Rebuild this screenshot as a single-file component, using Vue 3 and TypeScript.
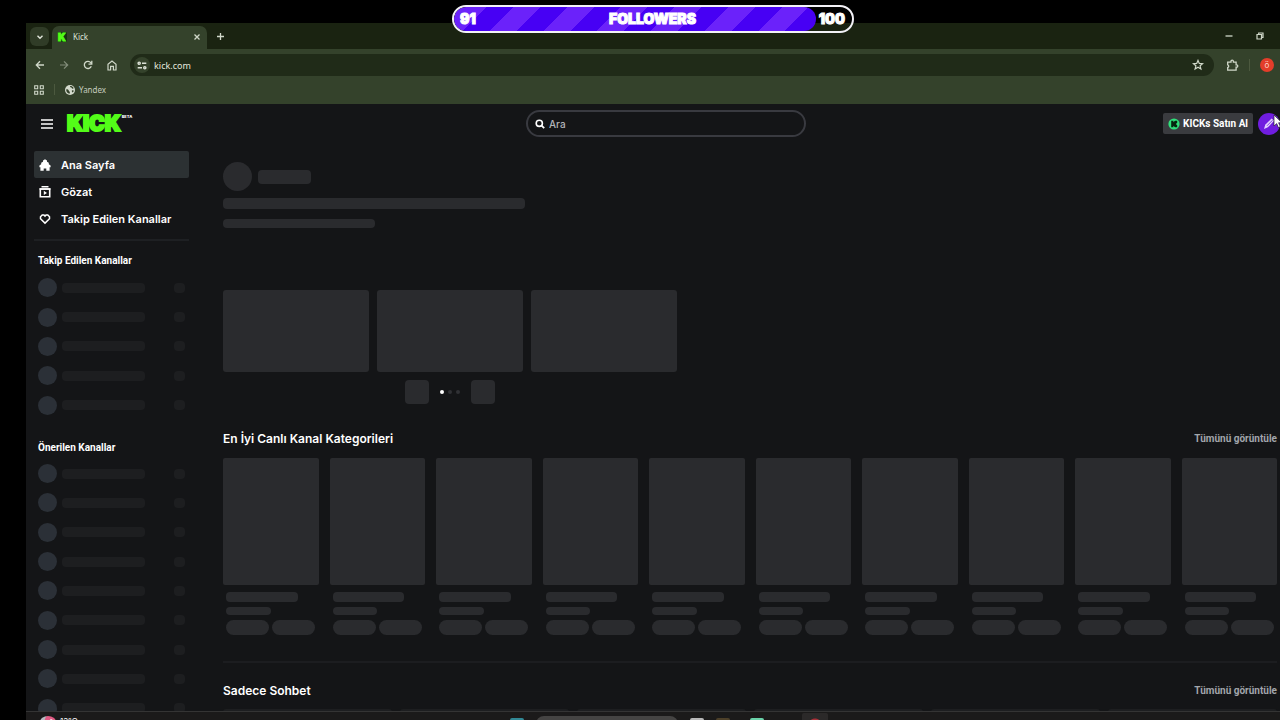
<script setup lang="ts">
import { ref } from 'vue'

const query = ref('')
const address = ref('kick.com')
const navigation = ['Ana Sayfa', 'Gözat', 'Takip Edilen Kanallar']
const channelGroups = [
  { title: 'Takip Edilen Kanallar', count: 5, kind: 'followed' },
  { title: 'Önerilen Kanallar', count: 9, kind: 'suggested' },
]
</script>

<template>
  <div class="desktop">
    <section class="browser">
      <div class="tabs">
        <button class="tab-search" aria-label="Sekme ara">
          <svg width="8" height="8" viewBox="0 0 8 8"><path d="M1.5 2.7 4 5.2 6.5 2.7" fill="none" stroke="currentColor" stroke-width="1.4" /></svg>
        </button>
        <div class="tab">
          <span class="favicon">K</span>
          <span class="tab-title">Kick</span>
          <button class="plain" aria-label="Sekmeyi kapat">
            <svg width="8" height="8" viewBox="0 0 8 8"><path d="m1.5 1.5 5 5m0-5-5 5" stroke="currentColor" stroke-width="1.3" /></svg>
          </button>
        </div>
        <button class="plain new-tab" aria-label="Yeni sekme">
          <svg width="9" height="9" viewBox="0 0 9 9"><path d="M4.5 1v7M1 4.5h7" stroke="currentColor" stroke-width="1.3" /></svg>
        </button>
        <div class="window-buttons">
          <button class="plain" aria-label="Küçült"><svg width="10" height="10" viewBox="0 0 10 10"><path d="M1.5 5h7" stroke="currentColor" stroke-width="1.3" /></svg></button>
          <button class="plain" aria-label="Geri yükle"><svg width="10" height="10" viewBox="0 0 10 10"><path d="M2 3.5h4.5V8H2zM3.7 3V2H8v4.5H7" fill="none" stroke="currentColor" stroke-width="1.2" /></svg></button>
        </div>
      </div>

      <div class="toolbar">
        <div class="history">
          <button class="plain" aria-label="Geri"><svg width="10" height="10" viewBox="0 0 10 10"><path d="M9 5H1.5M5 1.3 1.3 5 5 8.7" fill="none" stroke="currentColor" stroke-width="1.3" /></svg></button>
          <button class="plain muted" aria-label="İleri"><svg width="10" height="10" viewBox="0 0 10 10"><path d="M1 5h7.5M5 1.3 8.7 5 5 8.7" fill="none" stroke="currentColor" stroke-width="1.2" /></svg></button>
          <button class="plain" aria-label="Yenile"><svg width="10" height="10" viewBox="0 0 10 10"><path d="M8.3 6.2A3.6 3.6 0 1 1 7.8 2.7L8.7 3.8M8.8.8v3.3H5.5" fill="none" stroke="currentColor" stroke-width="1.3" /></svg></button>
          <button class="plain" aria-label="Giriş"><svg width="10" height="11" viewBox="0 0 10 11"><path d="M1 4.2 5 1l4 3.2V10H6.4V6.4H3.6V10H1z" fill="none" stroke="currentColor" stroke-width="1.2" /></svg></button>
        </div>
        <div class="omnibox">
          <button class="site-info" aria-label="Site bilgileri">
            <svg width="10" height="9" viewBox="0 0 10 9"><g fill="none" stroke="currentColor" stroke-width="1.4"><circle cx="2.2" cy="2.2" r="1.1" /><path d="M5 2.2h4.3M.7 6.8H5" /><circle cx="7.8" cy="6.8" r="1.1" /></g></svg>
          </button>
          <input v-model="address" aria-label="Adres" />
          <button class="plain" aria-label="Yer işareti ekle"><svg width="12" height="12" viewBox="0 0 12 12"><path d="m6 1.4 1.3 3 3.3.3-2.5 2.1.8 3.2L6 8.3 3.1 10l.8-3.2-2.5-2.1 3.3-.3z" fill="none" stroke="currentColor" stroke-width="1.2" /></svg></button>
        </div>
        <button class="plain extensions" aria-label="Uzantılar"><svg width="13" height="13" viewBox="0 0 13 13"><path d="M1.7 3.1H5V2.4a1.2 1.2 0 0 1 2.4 0v.7h2.7v2.7h.5a1.2 1.2 0 0 1 0 2.4h-.5v3H1.7V8.5a1.4 1.4 0 0 0 0-2.7z" fill="none" stroke="currentColor" stroke-width="1.3" /></svg></button>
        <span class="toolbar-line"></span>
        <button class="profile" aria-label="Profil">ö</button>
      </div>

      <nav class="bookmarks" aria-label="Yer işaretleri">
        <button class="plain" aria-label="Uygulamalar"><svg width="10" height="10" viewBox="0 0 10 10"><path d="M.7.7h3v3h-3zM6.3.7h3v3h-3zM.7 6.3h3v3h-3zM6.3 6.3h3v3h-3z" fill="none" stroke="currentColor" stroke-width="1.1" /></svg></button>
        <span class="bookmark-line"></span>
        <a href="#yandex">
          <svg width="10" height="10" viewBox="0 0 10 10"><circle cx="5" cy="5" r="5" fill="#d4dacd" /><path d="M1.2 4.4c1.6-.2 2.4.5 2.6 1.3s1.2.5 1.1 1.5l-.3 1.5C2.4 8.4 1 6.5 1.2 4.4zM5.2 1.1c-.5.9.1 1.3 1 1.4s.6 1.3 1.4 1.3 1-.7.9-1.1C7.7 1.6 6.6 1 5.2 1.1zM7 5.2l1.8.2c-.1 1-.7 1.7-1.2 2.1-.5-.7-1.1-1.4-.6-2.3z" fill="#34422b" /></svg>
          Yandex
        </a>
      </nav>

      <div class="site">
        <header class="site-header">
          <div class="brand">
            <button class="menu" aria-label="Menü"><svg width="12" height="10" viewBox="0 0 12 10"><path d="M0 1h12M0 5h12M0 9h12" stroke="currentColor" stroke-width="1.7" /></svg></button>
            <a class="logo" href="#kick"><span class="wordmark">KICK</span><span class="beta">BETA</span></a>
          </div>
          <label class="search">
            <svg width="10" height="10" viewBox="0 0 10 10"><circle cx="4.3" cy="4.3" r="3.1" fill="none" stroke="currentColor" stroke-width="1.6" /><path d="m6.6 6.6 2.6 2.6" stroke="currentColor" stroke-width="1.8" /></svg>
            <input v-model="query" type="search" placeholder="Ara" aria-label="Ara" />
          </label>
          <div class="account">
            <button class="buy">
              <svg width="12" height="12" viewBox="0 0 12 12"><circle cx="6" cy="6" r="5.6" fill="#2fe07a" /><path d="M3.2 2.7h2.2v1.6L7 2.7h2.2v2L7.9 6l1.3 1.3v2H7L5.4 7.7v1.6H3.2z" fill="#06260f" /></svg>
              KICKs Satın Al
            </button>
            <button class="avatar" aria-label="Hesap"><svg width="22" height="22" viewBox="0 0 22 22"><path d="m6 16 1.2-4.2 6.4-6.3 2.5 2.3-6.2 6.4z" fill="#e4d0ff" /><path d="m9 12.8 5.5-5.5" stroke="#6821d9" stroke-width=".8" /></svg></button>
          </div>
        </header>

        <div class="content">
          <aside class="sidebar">
            <nav class="main-nav" aria-label="Ana menü">
              <a v-for="(item, i) in navigation" :key="item" href="#menu" :class="{ active: i === 0 }">
                <svg v-if="i === 0" width="12" height="12" viewBox="0 0 12 12"><path d="m6 .3 2 1.3v1.1l1.8 1v1.6l1.8 1.2v1.7h-1v3.5H7.3V9.6H4.7v2.1H1.4V8.2h-1V6.5l1.8-1.2V3.7l1.8-1V1.6z" fill="currentColor" /></svg>
                <svg v-else-if="i === 1" width="12" height="12" viewBox="0 0 12 12"><path d="M2.5.8h7M.5 3h11" stroke="currentColor" stroke-width="1.4" /><path d="M1.3 3h9.4v7.8H1.3z" fill="none" stroke="currentColor" stroke-width="1.6" /><path d="m4.8 4.8 3.2 2.1L4.8 9z" fill="currentColor" /></svg>
                <svg v-else width="12" height="12" viewBox="0 0 12 12"><path d="M3.2 2H5l1 1.2L7 2h1.8l1.7 1.7v2L6 10.1 1.5 5.7v-2z" fill="none" stroke="currentColor" stroke-width="1.5" /></svg>
                {{ item }}
              </a>
            </nav>
            <section v-for="group in channelGroups" :key="group.title" :class="['channels', group.kind]">
              <h2>{{ group.title }}</h2>
              <ul>
                <li v-for="n in group.count" :key="n"><span class="face"></span><span class="name"></span><span class="live"></span></li>
              </ul>
            </section>
          </aside>

          <main>
            <section class="hero">
              <div class="streamer"><span class="bone portrait"></span><span class="bone streamer-name"></span></div>
              <div class="bone stream-title"></div>
              <div class="bone stream-category"></div>
              <div class="previews"><div v-for="n in 3" :key="n" class="bone"></div></div>
              <div class="pager">
                <button class="bone" aria-label="Önceki"></button>
                <div class="dots"><i v-for="n in 3" :key="n" :class="{ on: n === 1 }"></i></div>
                <button class="bone" aria-label="Sonraki"></button>
              </div>
            </section>

            <section class="categories">
              <div class="section-head"><h2>En İyi Canlı Kanal Kategorileri</h2><a href="#kategoriler">Tümünü görüntüle</a></div>
              <div class="cards">
                <div v-for="n in 10" :key="n" class="card">
                  <div class="bone cover"></div>
                  <div class="details">
                    <div class="bone line-a"></div>
                    <div class="bone line-b"></div>
                    <div class="tags"><span class="bone"></span><span class="bone"></span></div>
                  </div>
                </div>
              </div>
            </section>

            <section class="chatting">
              <div class="section-head"><h2>Sadece Sohbet</h2><a href="#sohbet">Tümünü görüntüle</a></div>
              <div class="streams"><div v-for="n in 6" :key="n"></div></div>
            </section>
          </main>
        </div>
      </div>

      <footer class="taskbar">
        <div class="weather"><span class="weather-dot"></span><span>13°C</span></div>
        <div class="apps"><i class="start"></i><i class="task-search"></i><i class="white"></i><i class="folder"></i><i class="teal"></i><i class="red"></i></div>
      </footer>
    </section>

    <div class="goal">
      <div class="goal-fill"></div>
      <span>91</span><strong>FOLLOWERS</strong><span>100</span>
    </div>
    <svg class="pointer" width="10" height="15" viewBox="0 0 10 15"><path d="M1 1v11l2.7-2.4 1.7 4 2-1-1.8-3.8H9z" fill="#fff" stroke="#28292c" stroke-width=".7" /></svg>
  </div>
</template>

<style>
body { background: #000; }
</style>

<style scoped>
* { box-sizing: border-box; }
.desktop { position: relative; height: 100vh; overflow: hidden; padding: 23px 0 0 26px; background: #000; color: #fff; font-family: Inter, "Liberation Sans", sans-serif; }
button, input { font: inherit; color: inherit; border: 0; padding: 0; margin: 0; background: none; outline: 0; }
a { color: inherit; text-decoration: none; }
svg { display: block; flex: none; }
h2, ul { margin: 0; padding: 0; }
.plain { display: grid; place-items: center; color: #d0d8c9; }
.browser { display: flex; flex-direction: column; height: 100%; background: #34422b; }
.tabs { display: flex; align-items: flex-end; height: 26px; padding-left: 4px; background: #1a2311; font-family: "Noto Sans", sans-serif; }
.tab-search { display: grid; place-items: center; width: 19px; height: 19px; margin-bottom: 3px; border-radius: 6px; background: #303c27; color: #e0e5db; }
.tab { display: flex; align-items: center; width: 155px; height: 23px; margin-left: 3px; padding: 0 6px 2px; border-radius: 7px 7px 0 0; background: #34422b; }
.favicon { width: 9px; height: 10px; color: #53fc18; background: #143212; font: 900 10px/10px Inter, sans-serif; -webkit-text-stroke: 1px #53fc18; }
.tab-title { flex: 1; margin-left: 6px; font-size: 8px; color: #dce1d7; }
.new-tab { margin: 0 0 8px 9px; }
.window-buttons { display: flex; gap: 21px; margin: 0 15px 8px auto; }
.toolbar { display: flex; align-items: center; height: 32px; padding: 0 6px 0 9px; }
.history { display: flex; gap: 14px; width: 95px; }
.muted { opacity: .5; }
.omnibox { display: flex; flex: 1; align-items: center; height: 22px; padding: 0 10px 0 4px; border-radius: 11px; background: #202b18; }
.site-info { display: grid; place-items: center; width: 16px; height: 16px; border-radius: 50%; background: #34422b; color: #dce1d7; }
.omnibox input { flex: 1; min-width: 0; margin-left: 3px; padding: 0 1px; font: 9px "Noto Sans", sans-serif; color: #e3e7df; }
.extensions { margin-left: 12px; }
.toolbar-line { width: 1px; height: 12px; margin: 0 10px; background: #4c593f; }
.profile { width: 14px; height: 14px; border-radius: 50%; background: #e33d2a; color: #ffd3c8; font-size: 8px; line-height: 14px; }
.bookmarks { display: flex; align-items: center; height: 23px; padding: 0 8px 6px; font: 8px "Noto Sans", sans-serif; color: #c6cdbf; }
.bookmark-line { width: 1px; height: 11px; margin: 0 10px; background: #4c593f; }
.bookmarks a { display: flex; align-items: center; gap: 4px; }
.site { display: flex; flex: 1; flex-direction: column; min-height: 0; overflow: hidden; background: #141517; }
.site-header { display: grid; flex: none; grid-template-columns: 1fr 280px 1fr; align-items: center; height: 39px; padding-left: 26px; }
.brand { display: flex; align-items: center; margin-left: -11px; }
.menu { width: 12px; margin-right: 14px; }
.logo { display: flex; align-items: flex-start; gap: 1px; }
.wordmark { color: #53fc18; font-size: 21px; font-weight: 900; line-height: 20px; -webkit-text-stroke: 2px #53fc18; }
.beta { font-size: 4px; font-weight: 800; line-height: 5px; }
.search { display: flex; align-items: center; gap: 4px; height: 27px; padding: 0 7px; border: 2px solid #393a40; border-radius: 14px; }
.search input { flex: 1; min-width: 0; font-size: 10px; font-weight: 500; }
.search input::placeholder { color: #b2b4b9; opacity: 1; }
.account { display: flex; align-items: center; justify-content: flex-end; gap: 5px; }
.buy { display: flex; align-items: center; gap: 3px; height: 21px; padding: 0 5px; border-radius: 2px; background: #3a3b3f; font: 700 10px Roboto, sans-serif; white-space: nowrap; }
.avatar { width: 22px; height: 22px; border-radius: 50%; background: #701de0; }
.content { display: flex; flex: 1; min-height: 0; overflow: hidden; }
.sidebar { flex: none; width: 170px; padding: 8px 7px 0 8px; }
.main-nav { padding-bottom: 7px; border-bottom: 2px solid #1e2023; }
.main-nav a { display: flex; align-items: center; gap: 10px; height: 27px; padding-left: 5px; border-radius: 2px; font-size: 11px; font-weight: 600; }
.main-nav .active { background: #2c3133; }
.channels { padding: 0 2px 0 4px; }
.channels h2 { font: 700 10px/14px Roboto, sans-serif; }
.channels ul { display: grid; grid-auto-rows: 1fr; list-style: none; }
.followed { padding-top: 13px; }
.followed ul { height: 147px; margin-top: 5px; }
.suggested { padding-top: 21px; }
.suggested ul { height: 264px; margin-top: 4px; }
.channels li { display: flex; align-items: center; }
.face { width: 19px; height: 19px; border-radius: 50%; background: #2b3037; }
.name { width: 83px; height: 10px; margin-left: 5px; border-radius: 4px; background: #1d1e20; }
.live { width: 11px; height: 10px; margin: 0 2px 0 auto; border-radius: 4px; background: #1d1e20; }
main { flex: 1; min-width: 0; padding: 19px 3px 0 27px; }
.bone { background: #2a2b2e; }
.streamer { display: flex; align-items: center; gap: 6px; }
.portrait { width: 29px; height: 29px; border-radius: 50%; }
.streamer-name { width: 53px; height: 14px; border-radius: 4px; }
.stream-title { width: 302px; height: 11px; margin-top: 7px; border-radius: 4px; }
.stream-category { width: 152px; height: 9px; margin-top: 10px; border-radius: 4px; }
.previews { display: grid; grid-template-columns: repeat(3, 1fr); gap: 8px; width: 454px; margin-top: 62px; }
.previews div { height: 82px; border-radius: 3px; }
.pager { display: flex; align-items: center; justify-content: center; gap: 11px; width: 454px; margin-top: 8px; }
.pager button { width: 24px; height: 24px; border-radius: 4px; }
.dots { display: flex; gap: 4px; }
.dots i { width: 4px; height: 4px; border-radius: 50%; background: #303135; }
.dots .on { background: #fff; }
.section-head { display: flex; align-items: center; justify-content: space-between; height: 20px; }
.section-head h2 { font-size: 12px; font-weight: 600; }
.section-head a { color: #a2a5ab; font: 700 10px Roboto, sans-serif; }
.categories { margin-top: 24px; padding-bottom: 26px; border-bottom: 2px solid #1c1d20; }
.cards { display: grid; grid-template-columns: repeat(10, 1fr); gap: 11px; margin-top: 10px; }
.cover { aspect-ratio: 3 / 4; border-radius: 2px; }
.details { padding: 7px 3px 0; }
.line-a { width: 80%; height: 10px; border-radius: 4px; }
.line-b { width: 50%; height: 8px; margin-top: 5px; border-radius: 4px; }
.tags { display: flex; gap: 3px; margin-top: 5px; }
.tags span { width: 43px; height: 15px; border-radius: 8px; }
.chatting { padding-top: 17px; }
.streams { display: grid; grid-template-columns: repeat(6, 1fr); gap: 8px; margin-top: 9px; }
.streams div { height: 90px; border-radius: 3px; background: #1d1e20; }
.taskbar { position: relative; flex: none; display: flex; justify-content: center; height: 9px; overflow: hidden; border-top: 1px solid #343434; background: #1b1a1a; }
.weather { position: absolute; left: 14px; top: 4px; display: flex; gap: 4px; font-size: 8px; line-height: 10px; }
.weather-dot { width: 16px; height: 12px; border-radius: 50%; background: radial-gradient(circle at 70% 40%, #fff 0 1px, #df5a83 2px 6px, #b7bbc1 7px); }
.apps { display: flex; align-items: flex-start; gap: 12px; padding: 6px 0 0 32px; }
.apps i { width: 14px; height: 8px; border-radius: 2px; }
.apps .start { background: #328996; }
.apps .task-search { width: 142px; height: 16px; margin-top: -2px; border-radius: 8px; background: #454443; }
.apps .white { background: #b8b8b8; }
.apps .folder { background: #4d4029; }
.apps .teal { margin-left: 8px; background: #6bd3aa; }
.apps .red { width: 26px; height: 12px; margin-top: -5px; margin-left: 26px; background: radial-gradient(circle at 50% 100%, #a63038 6px, #2b2929 7px); }
.goal { position: absolute; left: 452px; top: 5px; display: grid; grid-template-columns: 1fr auto 1fr; align-items: center; width: 402px; height: 28px; padding: 0 7px 2px 6px; border: 2px solid #f2f1f6; border-radius: 14px; overflow: hidden; background: linear-gradient(#000 16px, #1a2311 16px); font-size: 14px; }
.goal-fill { position: absolute; inset: 0 auto 0 0; width: 91%; border-radius: 12px; background: repeating-linear-gradient(135deg, #6b22fa 4px 23px, #4700f4 23px 42px); }
.goal span, .goal strong { position: relative; font-weight: 900; -webkit-text-stroke: 1px #fff; }
.goal span:last-child { text-align: right; }
.pointer { position: absolute; right: -3px; top: 114px; }
</style>
